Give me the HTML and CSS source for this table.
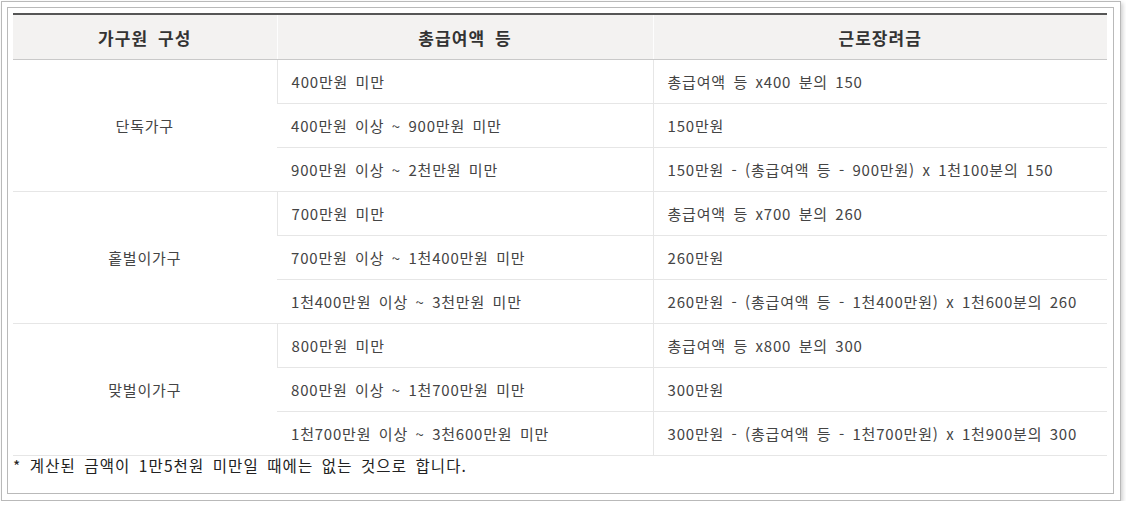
FILE: index.html
```html
<!DOCTYPE html>
<html lang="ko">
<head>
<meta charset="utf-8">
<title>근로장려금</title>
<link rel="stylesheet" href="styles.css">
</head>
<body>
<div class="frame">
  <div class="inner">
    <table class="tbl">
      <colgroup>
        <col class="c1"><col class="c2"><col class="c3">
      </colgroup>
      <thead>
        <tr><th>가구원 구성</th><th>총급여액 등</th><th>근로장려금</th></tr>
      </thead>
      <tbody>
        <tr class="first">
          <td class="grp" rowspan="3">단독가구</td>
          <td class="rng">400만원 미만</td>
          <td class="amt">총급여액 등 x400 분의 150</td>
        </tr>
        <tr>
          <td class="rng">400만원 이상 ~ 900만원 미만</td>
          <td class="amt">150만원</td>
        </tr>
        <tr>
          <td class="rng">900만원 이상 ~ 2천만원 미만</td>
          <td class="amt">150만원 - (총급여액 등 - 900만원) x 1천100분의 150</td>
        </tr>
        <tr class="first">
          <td class="grp" rowspan="3">홑벌이가구</td>
          <td class="rng">700만원 미만</td>
          <td class="amt">총급여액 등 x700 분의 260</td>
        </tr>
        <tr>
          <td class="rng">700만원 이상 ~ 1천400만원 미만</td>
          <td class="amt">260만원</td>
        </tr>
        <tr>
          <td class="rng">1천400만원 이상 ~ 3천만원 미만</td>
          <td class="amt">260만원 - (총급여액 등 - 1천400만원) x 1천600분의 260</td>
        </tr>
        <tr class="first">
          <td class="grp" rowspan="3">맞벌이가구</td>
          <td class="rng">800만원 미만</td>
          <td class="amt">총급여액 등 x800 분의 300</td>
        </tr>
        <tr>
          <td class="rng">800만원 이상 ~ 1천700만원 미만</td>
          <td class="amt">300만원</td>
        </tr>
        <tr>
          <td class="rng">1천700만원 이상 ~ 3천600만원 미만</td>
          <td class="amt">300만원 - (총급여액 등 - 1천700만원) x 1천900분의 300</td>
        </tr>
      </tbody>
    </table>
    <p class="note">* 계산된 금액이 1만5천원 미만일 때에는 없는 것으로 합니다.</p>
  </div>
</div>
</body>
</html>
```
FILE: styles.css
```css
html, body {
  margin: 0;
  padding: 0;
  background: #fff;
}
body {
  font-family: "Noto Sans CJK KR", "Liberation Sans", sans-serif;
  color: #444;
}
.frame {
  box-sizing: border-box;
  width: 1120px;
  height: 500px;
  margin: 1px 0 0 1px;
  border: 1px solid #b9b9b9;
  padding: 5px 6px 6px 5px;
  box-shadow: 2px 2px 4px rgba(0, 0, 0, 0.18);
  background: #fff;
}
.inner {
  box-sizing: border-box;
  height: 100%;
  border: 1px solid #b9b9b9;
  padding: 5px 6px 0 5px;
}
.tbl {
  width: 1094px;
  border-collapse: collapse;
  table-layout: fixed;
  border-top: 2px solid #565656;
}
.c1 { width: 264px; }
.c2 { width: 376px; }
.c3 { width: 454px; }
.tbl th {
  height: 44px;
  padding: 0;
  background: #f3f2f1;
  border-bottom: 1px solid #c9c9c9;
  border-left: 1px solid #fdfdfd;
  font-size: 17px;
  font-weight: 700;
  color: #333;
  letter-spacing: 1.1px;
  word-spacing: 4px;
  text-align: center;
}
.tbl th:first-child { border-left: none; }
.tbl td {
  height: 43px;
  padding: 0 0 0 14px;
  border-bottom: 1px solid #e6e6e6;
  font-size: 15px;
  letter-spacing: 0.8px;
  word-spacing: 2.5px;
  color: #444;
  vertical-align: middle;
}
.tbl td.grp {
  padding: 0;
  text-align: center;
}
.tbl tr.first td.rng { border-left: 1px solid #e6e6e6; }
.tbl td.amt { border-left: 1px solid #e6e6e6; }
.note {
  margin: 0;
  padding: 0;
  font-size: 15.5px;
  line-height: 18px;
  color: #222;
  letter-spacing: 1.1px;
  word-spacing: 3px;
}
```
